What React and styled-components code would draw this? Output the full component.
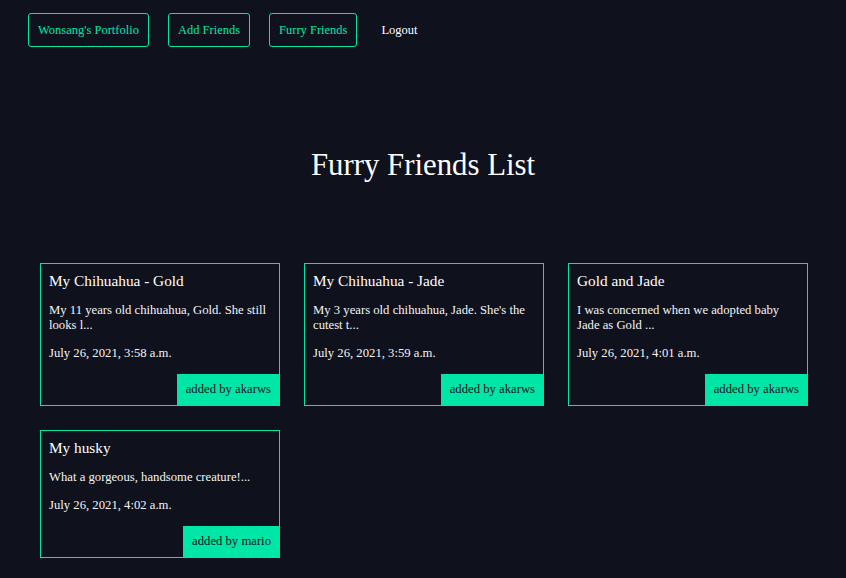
import React from "react";
import styled, { createGlobalStyle } from "styled-components";

const Global = createGlobalStyle`
  html, body { margin: 0; padding: 0; background: #0f111d; }
  body { font-family: "Liberation Serif", "Times New Roman", serif; color: #f4f4f4; }
`;

const Page = styled.div`
  min-height: 578px;
  background: #0f111d;
`;

const Nav = styled.nav`
  display: flex;
  align-items: center;
  gap: 19px;
  padding: 13px 28px 0;
`;

const NavLink = styled.a`
  display: inline-block;
  font-size: 12.5px;
  line-height: 15px;
  padding: 9px ${(p) => (p.$plain ? "4px" : "9px")} 8px;
  border: 1px solid ${(p) => (p.$plain ? "transparent" : "#00e6a7")};
  border-radius: 3px;
  color: ${(p) => (p.$plain ? "#ffffff" : "#00e6a7")};
  text-decoration: none;
  cursor: pointer;
`;

const Title = styled.h1`
  margin: 100px 0 0;
  text-align: center;
  font-weight: 400;
  font-size: 30.8px;
  line-height: 37px;
  color: #ffffff;
`;

const Grid = styled.div`
  display: grid;
  grid-template-columns: repeat(3, 240px);
  gap: 24px;
  align-items: start;
  padding: 0 40px;
  margin-top: 79px;
`;

const Card = styled.div`
  border: 1px solid #00e6a7;
  padding: 8px 0 0 8px;
  display: flex;
  flex-direction: column;
`;

const CardTitle = styled.h3`
  margin: 0;
  font-size: 15.3px;
  line-height: 18px;
  font-weight: 400;
  color: #ffffff;
  padding-right: 6px;
`;

const CardText = styled.p`
  margin: 13px 0 0;
  font-size: 12.7px;
  line-height: 15px;
  color: #f4f4f4;
  padding-right: 4px;
`;

const Badge = styled.div`
  align-self: flex-end;
  margin-top: 13px;
  background: #00e6a7;
  color: #0f111d;
  font-size: 12.7px;
  line-height: 15px;
  padding: 8px 8px 8px 9px;
`;

const friends = [
  {
    title: "My Chihuahua - Gold",
    text: "My 11 years old chihuahua, Gold. She still looks l...",
    date: "July 26, 2021, 3:58 a.m.",
    by: "akarws",
  },
  {
    title: "My Chihuahua - Jade",
    text: "My 3 years old chihuahua, Jade. She's the cutest t...",
    date: "July 26, 2021, 3:59 a.m.",
    by: "akarws",
  },
  {
    title: "Gold and Jade",
    text: "I was concerned when we adopted baby Jade as Gold ...",
    date: "July 26, 2021, 4:01 a.m.",
    by: "akarws",
  },
  {
    title: "My husky",
    text: "What a gorgeous, handsome creature!...",
    date: "July 26, 2021, 4:02 a.m.",
    by: "mario",
  },
];

export default function App() {
  return (
    <Page>
      <Global />
      <Nav>
        <NavLink>Wonsang's Portfolio</NavLink>
        <NavLink>Add Friends</NavLink>
        <NavLink>Furry Friends</NavLink>
        <NavLink $plain>Logout</NavLink>
      </Nav>
      <Title>Furry Friends List</Title>
      <Grid>
        {friends.map((f) => (
          <Card key={f.title}>
            <CardTitle>{f.title}</CardTitle>
            <CardText>{f.text}</CardText>
            <CardText>{f.date}</CardText>
            <Badge>added by {f.by}</Badge>
          </Card>
        ))}
      </Grid>
    </Page>
  );
}
